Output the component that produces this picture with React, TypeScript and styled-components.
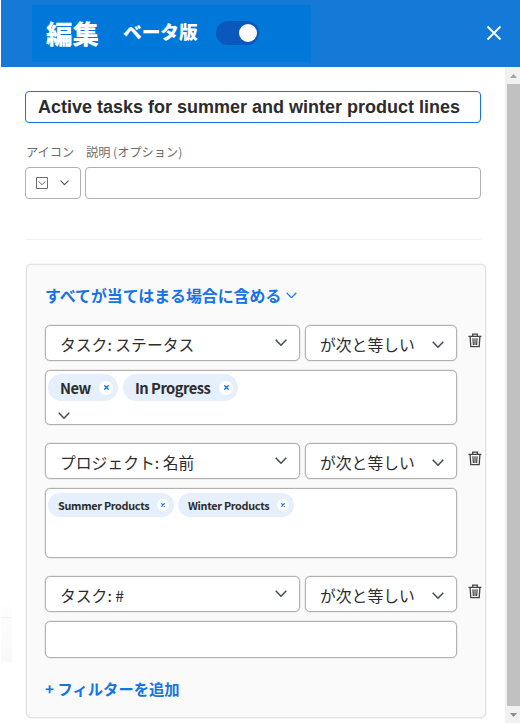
import React from "react";
import styled, { createGlobalStyle } from "styled-components";

const Global = createGlobalStyle`
  *, *::before, *::after { box-sizing: border-box; }
  html, body { margin: 0; background: #fff; overflow: hidden; }
  body { font-family: "Noto Sans CJK JP", "Noto Sans", sans-serif; color: #2c2c2c; }
  button { font: inherit; color: inherit; background: none; border: 0; padding: 0; margin: 0; text-align: left; }
  svg { display: block; flex: none; }
`;

const Page = styled.div`
  width: 520px;
  height: 723px;
  display: flex;
  flex-direction: column;
  background: #fff;
`;

const Header = styled.header`
  flex: none;
  height: 67px;
  margin-left: 1px;
  padding: 5px 18px 5px 31px;
  display: flex;
  justify-content: space-between;
  background: #1479d7;
`;

const TitleBlock = styled.div`
  width: 279px;
  height: 57px;
  padding-left: 14px;
  display: flex;
  background: #0078d9;
  color: #fff;
  font-weight: 700;
  white-space: nowrap;
`;

const Title = styled.h1`
  margin: 0;
  width: 77px;
  font-size: 26.5px;
  line-height: 55px;
  font-weight: 900;
`;

const Beta = styled.span`
  width: 93px;
  font-size: 18.7px;
  line-height: 51px;
  font-weight: 900;
`;

const Toggle = styled.button`
  margin-top: 16px;
  width: 43px;
  height: 24px;
  padding: 3px 2px 3px 3px;
  border-radius: 12px;
  background: #0b58bc;
  display: flex;
  justify-content: flex-end;
`;

const Knob = styled.span`
  width: 18px;
  height: 18px;
  border-radius: 50%;
  background: #fff;
`;

const Close = styled.button`
  margin-top: 20px;
  width: 16px;
  height: 16px;
`;

const Body = styled.div`
  flex: 1;
  min-height: 0;
  display: flex;
`;

const Gutter = styled.div`
  flex: none;
  width: 25px;
  padding: 535px 13px 0 1px;
`;

const GutterShade = styled.div`
  height: 60px;
  background: linear-gradient(135deg, #fff, #f8f8f8);
  &::before {
    content: "";
    display: block;
    height: 16px;
    border-bottom: 1px solid #f0f0f0;
  }
`;

const Content = styled.main`
  flex: 1;
  min-width: 0;
  padding-top: 24px;
`;

const Name = styled.div`
  width: 456px;
  height: 32px;
  padding-left: 12px;
  border: 1px solid #1473e6;
  border-radius: 4px;
  font: 700 18px/30px "Liberation Sans", Arial, sans-serif;
  white-space: nowrap;
`;

const MetaGrid = styled.div`
  margin-top: 19px;
  width: 456px;
  display: grid;
  grid-template-columns: 56px 396px;
  column-gap: 4px;
  grid-template-rows: 25px 32px;
`;

const Label = styled.label`
  padding-left: 1px;
  font-size: 12.2px;
  line-height: 20px;
  color: #6e6e6e;
  white-space: nowrap;
`;

const Field = styled.div`
  border: 1px solid #b1b1b1;
  border-radius: 4px;
  background: #fff;
  display: flex;
  align-items: center;
  padding-left: 10px;
  gap: 12px;
`;

const Rule = styled.hr`
  width: 456px;
  height: 1px;
  border: 0;
  margin: 40px 0 24px;
  background: #f1f1f1;
`;

const Panel = styled.section`
  width: 460px;
  height: 454px;
  margin-left: 1px;
  padding: 19px 0 0 18px;
  border: 1px solid #e1e1e1;
  box-shadow: 0 0 0 0.5px #ececec;
  border-radius: 5px;
  background: #fafafa;
`;

const LinkButton = styled.button`
  display: flex;
  align-items: center;
  height: 24px;
  gap: 5px;
  color: #1473e6;
  font-size: 15.9px;
  line-height: 24px;
  font-weight: 700;
  white-space: nowrap;
  svg { margin-top: -2px; }
`;

const Rows = styled.div`
  margin-top: 17px;
  display: flex;
  flex-direction: column;
  gap: 18px;
`;

const Filter = styled.div`
  display: grid;
  grid-template-columns: 412px 14px;
  column-gap: 11px;
  row-gap: 9px;
`;

const Selects = styled.div`
  display: grid;
  grid-template-columns: 255px 152px;
  column-gap: 5px;
`;

const Select = styled.button<{ $drop?: number; $end?: number }>`
  height: 36px;
  padding: 0 ${(p) => p.$end ?? 12}px 0 14px;
  border: 1px solid #b1b1b1;
  border-radius: 5px;
  background: #fff;
  box-shadow: 0 0 0 0.5px #dedede;
  display: flex;
  justify-content: space-between;
  font-size: 15.8px;
  line-height: 37px;
  white-space: nowrap;
  svg { margin-top: ${(p) => p.$drop ?? 13}px; }
`;

const Values = styled.div<{ $height: number; $top: number }>`
  height: ${(p) => p.$height}px;
  padding: ${(p) => p.$top}px 0 0 2px;
  border: 1px solid #b1b1b1;
  border-radius: 5px;
  background: #fff;
  box-shadow: 0 0 0 0.5px #dedede;
`;

const Chips = styled.div<{ $gap: number }>`
  display: flex;
  gap: ${(p) => p.$gap}px;
`;

const Chip = styled.span<{ $small?: boolean; $width: number }>`
  width: ${(p) => p.$width}px;
  height: ${(p) => (p.$small ? 24 : 27)}px;
  padding: 0 5px 0 ${(p) => (p.$small ? 10 : 12)}px;
  border-radius: 14px;
  background: #e6effc;
  display: flex;
  justify-content: space-between;
  align-items: center;
  font-size: ${(p) => (p.$small ? 10.8 : 14.7)}px;
  letter-spacing: ${(p) => (p.$small ? -0.28 : -0.5)}px;
  line-height: 24px;
  font-weight: 700;
  white-space: nowrap;
`;

const Remove = styled.span<{ $small?: boolean }>`
  width: ${(p) => (p.$small ? 12 : 14)}px;
  height: ${(p) => (p.$small ? 12 : 14)}px;
  border-radius: 50%;
  background: #fff;
  display: grid;
  place-items: center;
`;

const More = styled.div`
  padding: 11px 0 0 10px;
`;

const Delete = styled.button`
  height: 15px;
  margin-top: 8px;
`;

const AddFilter = styled(LinkButton)`
  margin-top: 18px;
  font-size: 15.3px;
`;

const Scrollbar = styled.div`
  flex: none;
  width: 15px;
  background: #f1f1f1;
  display: flex;
  flex-direction: column;
  align-items: flex-end;
`;

const ScrollCap = styled.div`
  width: 13px;
  height: 17px;
  padding: 7px 0 0 3px;
`;

const Thumb = styled.div`
  width: 13px;
  height: 624px;
  background: #c1c1c1;
`;

const Chevron = ({ color = "#4b4f57", size = 12, weight = 1.6 }: { color?: string; size?: number; weight?: number }) => (
  <svg width={size} height={size * 0.6} viewBox="0 0 12 7.2" fill="none" stroke={color} strokeWidth={weight}>
    <path d="M.7.8 6 6.2 11.3.8" />
  </svg>
);

const Trash = () => (
  <svg width="14" height="15" viewBox="0 0 14 15" fill="none" stroke="#444" strokeWidth="1.3">
    <path d="M.4 3.4h13M4.7 3.2V1.1h4.6v2.1M2.1 3.6l.7 10.1h8.4l.7-10.1" />
    <path d="M4.9 5.3l.5 6.8M7 5.3v6.8M9.1 5.3l-.5 6.8" strokeWidth="1.2" />
  </svg>
);

type Tag = { text: string; width: number };
type FilterData = { field: string; height: number; tags: Tag[]; small?: boolean; more?: boolean };

const filters: FilterData[] = [
  { field: "タスク: ステータス", height: 55, tags: [{ text: "New", width: 70 }, { text: "In Progress", width: 115 }], more: true },
  { field: "プロジェクト: 名前", height: 70, small: true, tags: [{ text: "Summer Products", width: 126 }, { text: "Winter Products", width: 116 }] },
  { field: "タスク: #", height: 37, tags: [] },
];

const FilterRow = ({ field, height, tags, small, more }: FilterData) => (
  <Filter>
    <Selects>
      <Select>{field}<Chevron /></Select>
      <Select $drop={15}>が次と等しい<Chevron /></Select>
    </Selects>
    <Delete aria-label="削除"><Trash /></Delete>
    <Values $height={height} $top={small ? 4 : 3}>
      <Chips $gap={small ? 4 : 5}>
        {tags.map((t) => (
          <Chip key={t.text} $small={small} $width={t.width}>
            {t.text}
            <Remove $small={small}>
              <svg width={small ? 4 : 5} height={small ? 4 : 5} viewBox="0 0 5 5" stroke="#1473e6" strokeWidth="1.4">
                <path d="M.3.3l4.4 4.4M4.7.3.3 4.7" />
              </svg>
            </Remove>
          </Chip>
        ))}
      </Chips>
      {more && <More><Chevron /></More>}
    </Values>
  </Filter>
);

export default function App() {
  return (
    <>
      <Global />
      <Page>
        <Header>
          <TitleBlock>
            <Title>編集</Title>
            <Beta>ベータ版</Beta>
            <Toggle role="switch" aria-checked="true"><Knob /></Toggle>
          </TitleBlock>
          <Close aria-label="閉じる">
            <svg width="16" height="16" viewBox="0 0 16 16" stroke="#fff" strokeWidth="1.8">
              <path d="M1.5 1.5l13 13M14.5 1.5l-13 13" />
            </svg>
          </Close>
        </Header>
        <Body>
          <Gutter><GutterShade /></Gutter>
          <Content>
            <Name>Active tasks for summer and winter product lines</Name>
            <MetaGrid>
              <Label>アイコン</Label>
              <Label>説明 (オプション)</Label>
              <Field>
                <svg width="12" height="12" viewBox="0 0 12 12" fill="none" stroke="#6e6e6e">
                  <path d="M.5.5h11v11H.5zM2.5 4.3 6 7.7l3.5-3.4" />
                </svg>
                <Chevron size={9} color="#5a5a66" weight={1.6} />
              </Field>
              <Field />
            </MetaGrid>
            <Rule />
            <Panel>
              <LinkButton>すべてが当てはまる場合に含める<Chevron color="#2680eb" size={11} weight={1.4} /></LinkButton>
              <Rows>
                {filters.map((f) => <FilterRow key={f.field} {...f} />)}
              </Rows>
              <AddFilter>+ フィルターを追加</AddFilter>
            </Panel>
          </Content>
          <Scrollbar>
            <ScrollCap>
              <svg width="7" height="4" viewBox="0 0 7 4" fill="#a3a3a3"><path d="M3.5 0 7 4H0z" /></svg>
            </ScrollCap>
            <Thumb />
            <ScrollCap>
              <svg width="7" height="4" viewBox="0 0 7 4" fill="#8c8c8c"><path d="M0 0h7L3.5 4z" /></svg>
            </ScrollCap>
          </Scrollbar>
        </Body>
      </Page>
    </>
  );
}
